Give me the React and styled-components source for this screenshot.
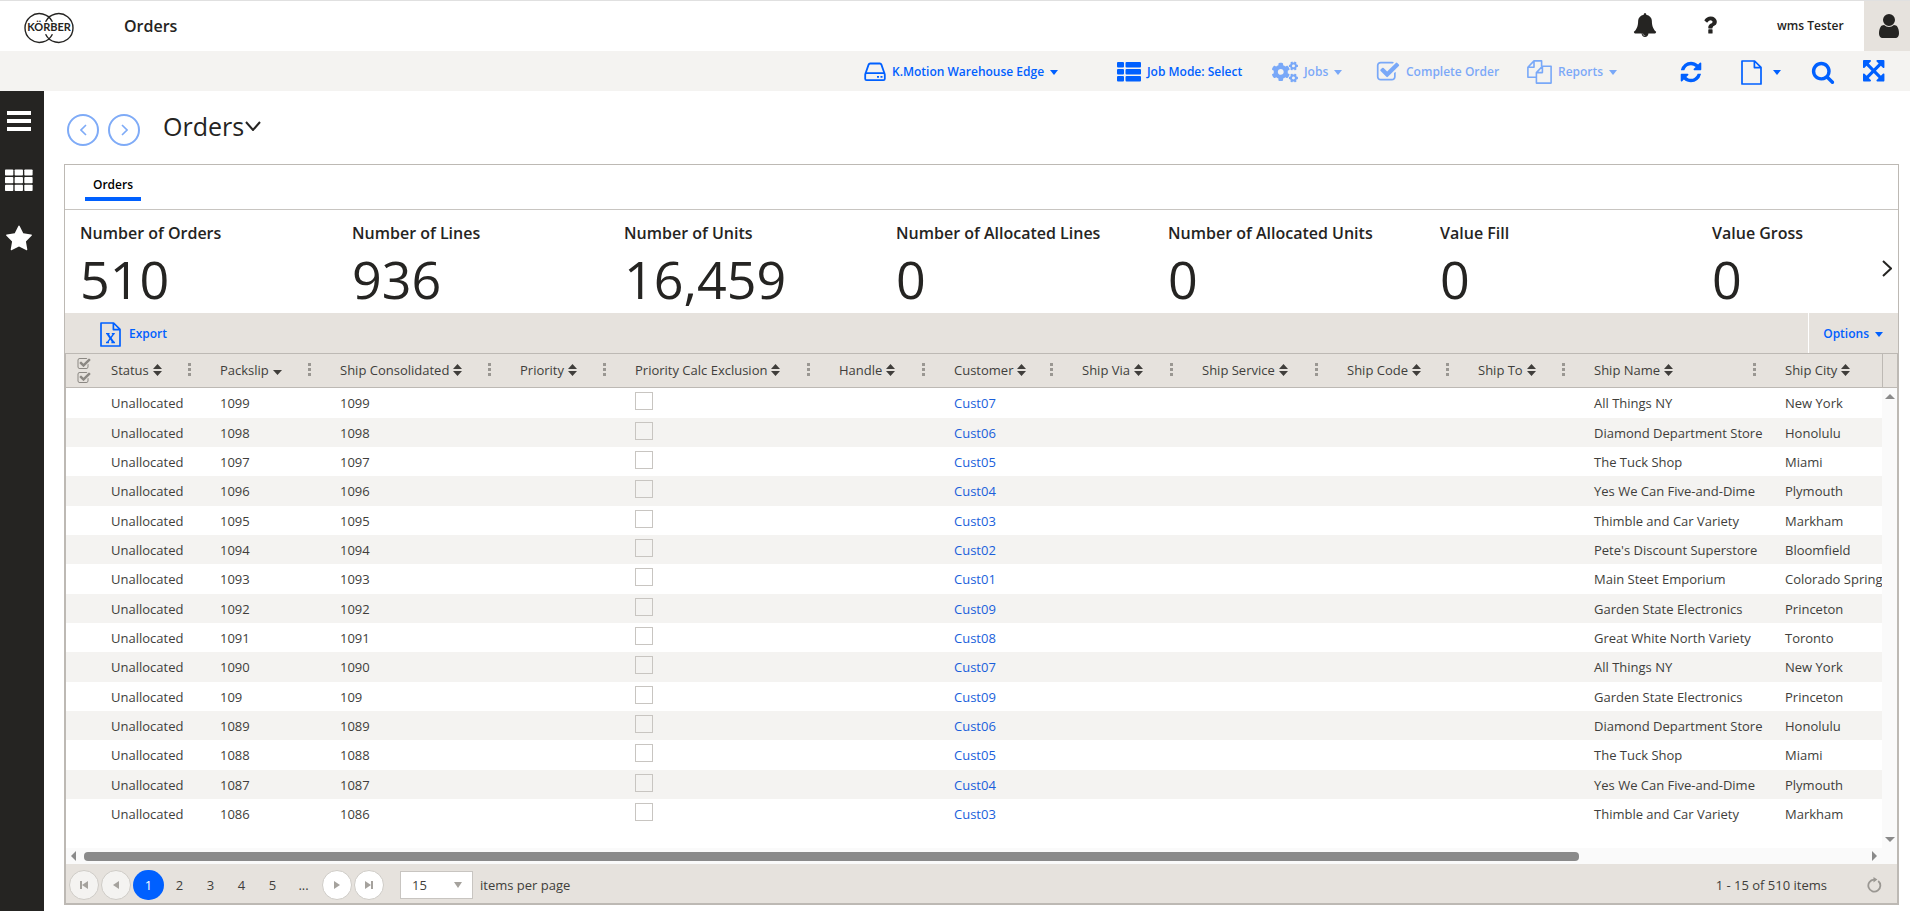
import React from 'react';
import styled, { createGlobalStyle, css } from 'styled-components';
import { FaCogs } from 'react-icons/fa';

const BLUE = '#0060ff';
const INK = '#252422';
const SAND = '#e6e2dd';
const LINE = '#bdb9b4';

const GlobalStyle = createGlobalStyle`
  *, *::before, *::after { box-sizing: border-box; }
  body {
    margin: 0;
    background: #fff;
    color: ${INK};
    font-family: "Open Sans", "Noto Sans", sans-serif;
    font-size: 13px;
    line-height: 20px;
  }
  button, input, select { font: inherit; color: inherit; }
  h1, h2, dl, dt, dd, ul { margin: 0; padding: 0; font-weight: 400; }
`;

/* ---------- icons ---------- */

const Glyph = ({ d, size = 24, box = '0 0 1792 1792' }) => (
  <svg width={size} height={size} viewBox={box} fill="currentColor" aria-hidden="true">
    <path d={d} />
  </svg>
);

const PATHS = {
  star: 'M1728 647q0 22-26 48l-363 354 86 500q1 7 1 20 0 21-10.5 35.5t-30.5 14.5q-19 0-40-12l-449-236-449 236q-22 12-40 12-21 0-31.5-14.5t-10.5-35.5q0-6 2-20l86-500-364-354q-25-27-25-48 0-37 56-46l502-73 225-455q19-41 49-41t49 41l225 455 502 73q56 9 56 46z',
  search: 'M1216 832q0-185-131.5-316.5t-316.5-131.5-316.5 131.5-131.5 316.5 131.5 316.5 316.5 131.5 316.5-131.5 131.5-316.5zm512 832q0 52-38 90t-90 38q-54 0-90-38l-343-342q-179 124-399 124-143 0-273.5-55.5t-225-150-150-225-55.5-273.5 55.5-273.5 150-225 225-150 273.5-55.5 273.5 55.5 225 150 150 225 55.5 273.5q0 220-124 399l343 343q37 37 37 90z',
  user: 'M1536 1399q0 109-62.5 187t-150.5 78h-854q-88 0-150.5-78t-62.5-187q0-85 8.5-160.5t31.5-152 58.5-131 94-89 134.5-34.5q131 128 313 128t313-128q76 0 134.5 34.5t94 89 58.5 131 31.5 152 8.5 160.5zm-256-887q0 159-112.5 271.5t-271.5 112.5-271.5-112.5-112.5-271.5 112.5-271.5 271.5-112.5 271.5 112.5 112.5 271.5z',
  refresh: 'M1639 1056q0 5-1 7-64 268-268 434.5t-478 166.5q-146 0-282.5-55t-243.5-157l-129 129q-19 19-45 19t-45-19-19-45v-448q0-26 19-45t45-19h448q26 0 45 19t19 45-19 45l-137 137q71 66 161 102t187 36q134 0 250-65t186-179q11-17 53-117 8-23 30-23h192q13 0 22.5 9.5t9.5 22.5zm25-800v448q0 26-19 45t-45 19h-448q-26 0-45-19t-19-45 19-45l138-138q-148-137-349-137-134 0-250 65t-186 179q-11 17-53 117-8 23-30 23h-199q-13 0-22.5-9.5t-9.5-22.5v-7q65-268 270-434.5t480-166.5q146 0 284 55.5t245 156.5l130-129q19-19 45-19t45 19 19 45z',
  question: 'M1088 1256v240q0 16-12 28t-28 12h-240q-16 0-28-12t-12-28v-240q0-16 12-28t28-12h240q16 0 28 12t12 28zm316-600q0 54-15.5 101t-35 76.5-55 59.5-57.5 43.5-61 35.5q-41 23-68.5 65t-27.5 67q0 17-12 32.5t-28 15.5h-240q-15 0-25.5-18.5t-10.5-37.5v-45q0-83 65-156.5t143-108.5q59-27 84-56t25-76q0-42-46.5-74t-107.5-32q-65 0-108 29-35 25-107 115-13 16-31 16-12 0-25-8l-164-125q-13-10-15.5-25t5.5-28q160-266 464-266 80 0 161 31t146 83 106 127.5 41 158.5z',
  bell: 'M912 1696q0-16-16-16-59 0-101.5-42.5t-42.5-101.5q0-16-16-16t-16 16q0 73 51.5 124.5t124.5 51.5q16 0 16-16zm816-288q0 52-38 90t-90 38h-448q0 106-75 181t-181 75-181-75-75-181h-448q-52 0-90-38t-38-90q50-42 91-88t85-119.5 74.5-158.5 50-206 19.5-260q0-152 117-282.5t307-158.5q-8-19-8-39 0-40 28-68t68-28 68 28 28 68q0 20-8 39 190 28 307 158.5t117 282.5q0 139 19.5 260t50 206 74.5 158.5 85 119.5 91 88z',
  expand: 'M1283 413l-355 355 355 355 144-144q29-31 70-14 39 17 39 59v448q0 26-19 45t-45 19h-448q-42 0-59-40-17-39 14-69l144-144-355-355-355 355 144 144q31 30 14 69-17 40-59 40h-448q-26 0-45-19t-19-45v-448q0-42 40-59 39-17 69 14l144 144 355-355-355-355-144 144q-19 19-45 19-12 0-24-5-40-17-40-59v-448q0-26 19-45t45-19h448q42 0 59 40 17 39-14 69l-144 144 355 355 355-355-144-144q-31-30-14-69 17-40 59-40h448q26 0 45 19t19 45v448q0 42-39 59-13 5-25 5-26 0-45-19z',
  check: 'M1472 930v318q0 119-84.5 203.5t-203.5 84.5h-832q-119 0-203.5-84.5t-84.5-203.5v-832q0-119 84.5-203.5t203.5-84.5h832q63 0 117 25 15 7 18 23 3 17-9 29l-49 49q-10 10-23 10-3 0-9-2-23-6-45-6h-832q-66 0-113 47t-47 113v832q0 66 47 113t113 47h832q66 0 113-47t47-113v-254q0-13 9-22l64-64q10-10 23-10 6 0 12 3 20 8 20 29zm231-489l-814 814q-24 24-57 24t-57-24l-430-430q-24-24-24-57t24-57l110-110q24-24 57-24t57 24l263 263 647-647q24-24 57-24t57 24l110 110q24 24 24 57t-24 57z',
};

const DriveIcon = () => (
  <svg width="22" height="20" viewBox="0 0 22 20" fill="none" stroke="currentColor" strokeWidth="1.8" aria-hidden="true">
    <path d="M1.5 11.5 4.6 2.6Q5 1.5 6.2 1.5h9.6q1.2 0 1.6 1.1l3.1 8.9" />
    <rect x="1.2" y="11.2" width="19.6" height="7" rx="1.4" />
    <path d="M13 14.8h2M16.5 14.8h2" />
  </svg>
);

const ListIcon = () => (
  <svg width="24" height="20" viewBox="0 0 24 20" fill="currentColor" aria-hidden="true">
    {[0, 7, 14].map((y) => (
      <g key={y}>
        <rect x="0" y={y} width="7" height="5.6" rx="1" />
        <rect x="8.5" y={y} width="15.5" height="5.6" rx="1" />
      </g>
    ))}
  </svg>
);

const PagesIcon = () => (
  <svg width="25" height="24" viewBox="0 0 25 24" fill="none" stroke="currentColor" strokeWidth="1.6" strokeLinejoin="round" aria-hidden="true">
    <path d="M9 17.2H.9V7.2L7 .9h7.6v5.6M.9 7.2H7V.9" />
    <path d="M9.4 12.6 15.4 6.3h8.7v16.8H9.4zM9.4 12.6h6V6.3" />
  </svg>
);

const PageIcon = ({ excel }) => (
  <svg width="21" height="25" viewBox="0 0 21 25" fill="none" stroke="currentColor" strokeWidth="1.7" strokeLinejoin="round" aria-hidden="true">
    <path d="M1 1h12.6L20 7.4V24H1zM13.4 1v6.6H20" />
    {excel && (
      <>
        <path d="M7.6 12l5.8 8.4" strokeWidth="2.1" />
        <path d="M13.6 12 7.4 20.4M6 11.7h3.6M11.8 11.7h3M6 20.5h3M11.4 20.5h3.6" strokeWidth="1.3" />
      </>
    )}
  </svg>
);

const BarsIcon = () => (
  <svg width="24" height="20" viewBox="0 0 24 20" fill="currentColor" aria-hidden="true">
    <path d="M0 0h24v4H0zM0 8h24v4H0zM0 16h24v4H0z" />
  </svg>
);

const TilesIcon = () => (
  <svg width="29" height="23" viewBox="0 0 29 23" fill="currentColor" aria-hidden="true">
    {[0, 8, 16].map((y) =>
      [0, 10, 20].map((x) => <rect key={`${x}-${y}`} x={x} y={y} width="8.6" height="6.4" rx="0.8" />)
    )}
  </svg>
);

const Logo = () => (
  <svg width="52" height="32" viewBox="0 0 52 32" fill="none" stroke={INK} role="img" aria-label="Körber">
    <g strokeWidth="1.4">
      <path d="M29.4 9.8A14.4 14.4 0 1 0 29.4 22.2" />
      <path d="M22.6 9.8A14.4 14.4 0 1 1 22.6 22.2" />
    </g>
    <text x="26" y="19.4" textAnchor="middle" fontFamily="Lato, sans-serif" fontSize="11" fontWeight="700" fill={INK} stroke="none">
      KÖRBER
    </text>
  </svg>
);

const Chevron = ({ dir = 'right', w = 8, h = 14, weight = 1.6 }) => {
  const d = {
    right: `M1 1 ${w - 1} ${h / 2} 1 ${h - 1}`,
    left: `M${w - 1} 1 1 ${h / 2} ${w - 1} ${h - 1}`,
    down: `M1 1 ${w / 2} ${h - 1} ${w - 1} 1`,
  }[dir];
  return (
    <svg width={w} height={h} viewBox={`0 0 ${w} ${h}`} fill="none" stroke="currentColor" strokeWidth={weight} aria-hidden="true">
      <path d={d} />
    </svg>
  );
};

const Triangle = ({ dir = 'down', size = 8, depth = 5, bar }) => {
  const horizontal = dir === 'left' || dir === 'right';
  const w = horizontal ? depth : size;
  const h = horizontal ? size : depth;
  const d = {
    down: `M0 0h${w}L${w / 2} ${h}z`,
    up: `M0 ${h}h${w}L${w / 2} 0z`,
    left: `M${w} 0v${h}L0 ${h / 2}z`,
    right: `M0 0v${h}L${w} ${h / 2}z`,
  }[dir];
  return (
    <svg width={bar ? w + 2 : w} height={h} viewBox={`${bar && dir === 'left' ? -2 : 0} 0 ${bar ? w + 2 : w} ${h}`} fill="currentColor" aria-hidden="true">
      <path d={d} />
      {bar && <rect x={dir === 'left' ? -2 : w} y="0" width="2" height={h} />}
    </svg>
  );
};

const SortIcon = ({ active }) => (
  <svg width="9" height="12" viewBox="0 0 9 12" fill="currentColor" aria-hidden="true">
    {active ? <path d="M0 6h9L4.5 11z" /> : <path d="M0 5h9L4.5 0zM0 7h9L4.5 12z" />}
  </svg>
);

const ReloadIcon = () => (
  <svg width="16" height="16" viewBox="0 0 16 16" fill="none" stroke="currentColor" strokeWidth="1.8" aria-hidden="true">
    <path d="M12.2 4A6 6 0 1 1 8 2.6" />
    <path d="M7.5 0v5.4L11.4 2.6z" fill="currentColor" stroke="none" />
  </svg>
);

/* ---------- shell ---------- */

const Page = styled.div`
  display: flex;
  flex-direction: column;
  min-height: 100vh;
`;

const plainButton = css`
  display: inline-flex;
  align-items: center;
  padding: 0;
  border: 0;
  background: none;
  cursor: pointer;
`;

const Header = styled.header`
  display: flex;
  align-items: stretch;
  height: 51px;
  border-top: 1px solid #e0e0e0;
  padding-left: 23px;
`;

const Brand = styled.a`
  display: flex;
  align-items: center;
  padding-top: 4px;
`;

const AppName = styled.span`
  flex: 1;
  align-self: center;
  padding-left: 49px;
  font-size: 16px;
  font-weight: 600;
`;

const HeaderActions = styled.div`
  display: grid;
  grid-template-columns: 65px 79px 87px 46px;
`;

const HeaderButton = styled.button`
  ${plainButton}
  padding-bottom: 2px;
`;

const UserName = styled.span`
  align-self: center;
  font-size: 12px;
  font-weight: 600;
  white-space: nowrap;
`;

const Account = styled.button`
  ${plainButton}
  justify-content: center;
  padding-left: 3px;
  background: ${SAND};
`;

const Toolbar = styled.nav`
  display: grid;
  grid-template-columns: 253px 155px 104px 151px 152px 62px 70px 52px 22px;
  justify-content: end;
  justify-items: start;
  height: 40px;
  padding: 2px 25px 0 0;
  background: #f4f3f1;
`;

const Tool = styled.button`
  ${plainButton}
  gap: ${(p) => p.$gap || 6}px;
  color: ${BLUE};
  font-size: 12px;
  font-weight: 600;
  white-space: nowrap;

  &:disabled {
    opacity: 0.5;
    cursor: default;
  }
`;

const Main = styled.div`
  display: flex;
  flex: 1;
`;

const Sidebar = styled.nav`
  display: flex;
  flex-direction: column;
  align-items: flex-start;
  gap: 33px;
  width: 44px;
  padding: 17px 0 0 5px;
  background: ${INK};
`;

const SideButton = styled.button`
  ${plainButton}
  justify-content: center;
  width: 28px;
  height: 26px;
  color: #fff;
`;

const Content = styled.main`
  display: flex;
  flex: 1;
  flex-direction: column;
  min-width: 0;
  padding: 0 11px 6px 20px;
`;

const TitleBar = styled.div`
  display: flex;
  align-items: center;
  height: 73px;
  padding: 4px 0 0 3px;
`;

const RoundButton = styled.button`
  ${plainButton}
  justify-content: center;
  width: 32px;
  height: 32px;
  margin-right: 9px;
  border: 2px solid #7fabf7;
  border-radius: 50%;
  color: #7fabf7;
`;

const Title = styled.h1`
  display: flex;
  align-items: center;
  gap: 1px;
  padding: 0 0 8px 14px;
  font-size: 25px;
  line-height: 36px;
`;

const Panel = styled.section`
  display: flex;
  flex: 1;
  flex-direction: column;
  border: 1px solid ${LINE};
`;

const Tabs = styled.div`
  display: flex;
  align-items: flex-start;
  height: 45px;
  padding: 8px 20px 0;
  border-bottom: 1px solid #c8c5c1;
`;

const Tab = styled.button`
  ${plainButton}
  justify-content: center;
  width: 56px;
  height: 28px;
  border-bottom: 4px solid ${BLUE};
  color: #000;
  font-size: 12px;
  font-weight: 600;
`;

/* ---------- key figures ---------- */

const Figures = styled.div`
  display: flex;
  height: 103px;
`;

const FigureList = styled.dl`
  display: flex;
  flex: 1;
  min-width: 0;
  overflow: hidden;
  padding: 11px 0 0 15px;
`;

const Figure = styled.div`
  flex: 0 0 272px;
`;

const FigureName = styled.dt`
  font-size: 16px;
  font-weight: 600;
  line-height: 24px;
  white-space: nowrap;
`;

const FigureValue = styled.dd`
  font-size: 52px;
  line-height: 68px;
`;

const NextFigures = styled.button`
  ${plainButton}
  width: 16px;
  padding-top: 14px;
`;

/* ---------- grid ---------- */

const GridBar = styled.div`
  display: flex;
  align-items: stretch;
  justify-content: space-between;
  height: 40px;
  background: ${SAND};
`;

const ExportButton = styled(Tool)`
  padding: 2px 0 0 35px;
`;

const OptionsButton = styled(Tool)`
  padding: 2px 15px 0 14px;
  border-left: 1px solid #fff;
`;

const Grid = styled.div`
  display: flex;
  flex: 1;
  flex-direction: column;
  border: 1px solid ${LINE};
`;

const GridArea = styled.div`
  display: flex;
  flex: 1;
`;

const TableView = styled.div`
  flex: 1;
  min-width: 0;
  overflow: hidden;
`;

const Table = styled.table`
  width: 100%;
  border-collapse: separate;
  border-spacing: 0;
  table-layout: fixed;
  color: #403e3b;
`;

const Col = styled.col`
  width: ${(p) => (p.$w ? `${p.$w}px` : 'auto')};
`;

const HeadCell = styled.th`
  height: 34px;
  padding: 0 13px 2px 12px;
  border-bottom: 1px solid ${LINE};
  background: ${SAND};
  font-weight: 400;
  text-align: left;
  white-space: nowrap;
`;

const SelectHead = styled(HeadCell)`
  padding: 0 0 0 11px;
  color: #8b8883;

  svg { display: block; }
`;

const HeadInner = styled.div`
  display: flex;
  align-items: center;
  justify-content: space-between;
`;

const SortButton = styled.button`
  ${plainButton}
  gap: 4px;
`;

const MenuDots = styled.button`
  ${plainButton}
  flex-direction: column;
  justify-content: space-between;
  width: 3px;
  height: 13px;
  margin-right: 4px;

  i {
    width: 3px;
    height: 3px;
    background: #9a9792;
  }
`;

const Row = styled.tr`
  height: 29px;

  &:nth-child(3n + 1) { height: 30px; }
  &:nth-child(even) { background: #f4f3f1; }
`;

const Cell = styled.td`
  padding: 0 0 0 12px;
  overflow: hidden;
  white-space: nowrap;
`;

const CustomerLink = styled.a`
  color: #1a5fdb;
  text-decoration: none;
`;

const Tick = styled.input`
  display: block;
  appearance: none;
  width: 18px;
  height: 18px;
  margin: 0 0 4px;
  border: 1px solid #c8c5c1;
`;

const ScrollSide = styled.div`
  display: flex;
  flex-direction: column;
  width: 15px;
`;

const ScrollHead = styled.div`
  height: 34px;
  border-bottom: 1px solid ${LINE};
  border-left: 1px solid ${LINE};
  background: ${SAND};
`;

const VerticalTrack = styled.div`
  display: flex;
  flex: 1;
  flex-direction: column;
  align-items: center;
  justify-content: space-between;
  padding: 6px 0;
  background: #fafafa;
  color: #8a8a8a;
`;

const HorizontalTrack = styled.div`
  display: flex;
  align-items: center;
  gap: 8px;
  height: 16px;
  padding: 0 20px 0 5px;
  background: #fafafa;
  color: #8a8a8a;
`;

const ThumbLane = styled.div`
  flex: 1;
`;

const Thumb = styled.div`
  width: 84%;
  height: 9px;
  border-radius: 4px;
  background: #8a8a8a;
`;

const Pager = styled.div`
  display: flex;
  align-items: center;
  height: 39px;
  padding: 3px 15px 0 3px;
  background: ${SAND};
  color: #403e3b;
`;

const PagerStep = styled.button`
  ${plainButton}
  justify-content: center;
  width: 30px;
  height: 30px;
  margin-right: 2px;
  border: 1px solid #cfccc7;
  border-radius: 50%;
  background: #fff;
  color: #a5a29d;

  &:disabled { background: #f4f3f1; }
`;

const PageNumber = styled.button`
  ${plainButton}
  justify-content: center;
  width: 31px;
  height: 30px;
  border-radius: 15px;
  background: ${(p) => (p.$current ? BLUE : 'transparent')};
  color: ${(p) => (p.$current ? '#fff' : 'inherit')};
`;

const PageNumbers = styled.div`
  display: flex;
  padding-right: 3px;
`;

const SizeLabel = styled.label`
  display: flex;
  align-items: center;
  gap: 7px;
  margin-left: 14px;
`;

const SizeBox = styled.span`
  display: grid;
  align-items: center;
  width: 73px;
  height: 28px;

  > * { grid-area: 1 / 1; }
  > svg { justify-self: end; margin-right: 11px; color: #a5a29d; pointer-events: none; }
`;

const SizeSelect = styled.select`
  appearance: none;
  width: 100%;
  height: 28px;
  padding: 0 24px 0 11px;
  border: 1px solid #c8c5c1;
  border-radius: 0;
  background: #fff;
`;

const RangeText = styled.span`
  margin-left: auto;
  padding-right: 39px;
`;

const Reload = styled.button`
  ${plainButton}
  color: #9a9792;
`;

/* ---------- data ---------- */

const figures = [
  ['Number of Orders', '510'],
  ['Number of Lines', '936'],
  ['Number of Units', '16,459'],
  ['Number of Allocated Lines', '0'],
  ['Number of Allocated Units', '0'],
  ['Value Fill', '0'],
  ['Value Gross', '0'],
];

const columns = [
  ['Status', 109],
  ['Packslip', 120],
  ['Ship Consolidated', 180],
  ['Priority', 115],
  ['Priority Calc Exclusion', 204],
  ['Handle', 115],
  ['Customer', 128],
  ['Ship Via', 120],
  ['Ship Service', 145],
  ['Ship Code', 131],
  ['Ship To', 116],
  ['Ship Name', 191],
  ['Ship City', 0],
];

const customers = {
  Cust01: ['Main Steet Emporium', 'Colorado Spring'],
  Cust02: ["Pete's Discount Superstore", 'Bloomfield'],
  Cust03: ['Thimble and Car Variety', 'Markham'],
  Cust04: ['Yes We Can Five-and-Dime', 'Plymouth'],
  Cust05: ['The Tuck Shop', 'Miami'],
  Cust06: ['Diamond Department Store', 'Honolulu'],
  Cust07: ['All Things NY', 'New York'],
  Cust08: ['Great White North Variety', 'Toronto'],
  Cust09: ['Garden State Electronics', 'Princeton'],
};

const orders = [
  ['1099', 'Cust07'],
  ['1098', 'Cust06'],
  ['1097', 'Cust05'],
  ['1096', 'Cust04'],
  ['1095', 'Cust03'],
  ['1094', 'Cust02'],
  ['1093', 'Cust01'],
  ['1092', 'Cust09'],
  ['1091', 'Cust08'],
  ['1090', 'Cust07'],
  ['109', 'Cust09'],
  ['1089', 'Cust06'],
  ['1088', 'Cust05'],
  ['1087', 'Cust04'],
  ['1086', 'Cust03'],
];

const OrdersTable = () => (
  <Table>
    <colgroup>
      <Col $w={33} />
      {columns.map(([name, w]) => <Col key={name} $w={w} />)}
    </colgroup>
    <thead>
      <tr>
        <SelectHead aria-label="Select all">
          <Glyph d={PATHS.check} size={14} />
          <Glyph d={PATHS.check} size={14} />
        </SelectHead>
        {columns.map(([name, w]) => (
          <HeadCell key={name}>
            <HeadInner>
              <SortButton>
                {name}
                <SortIcon active={name === 'Packslip'} />
              </SortButton>
              {w > 0 && <MenuDots aria-label={`${name} menu`}><i /><i /><i /></MenuDots>}
            </HeadInner>
          </HeadCell>
        ))}
      </tr>
    </thead>
    <tbody>
      {orders.map(([slip, cust]) => (
        <Row key={slip}>
          <Cell />
          <Cell>Unallocated</Cell>
          <Cell>{slip}</Cell>
          <Cell>{slip}</Cell>
          <Cell />
          <Cell><Tick type="checkbox" aria-label={`Priority calc exclusion ${slip}`} /></Cell>
          <Cell />
          <Cell><CustomerLink href="#customer">{cust}</CustomerLink></Cell>
          <Cell />
          <Cell />
          <Cell />
          <Cell />
          <Cell>{customers[cust][0]}</Cell>
          <Cell>{customers[cust][1]}</Cell>
        </Row>
      ))}
    </tbody>
  </Table>
);

export default function App() {
  return (
    <Page>
      <GlobalStyle />
      <Header>
        <Brand href="#home"><Logo /></Brand>
        <AppName>Orders</AppName>
        <HeaderActions>
          <HeaderButton aria-label="Notifications"><Glyph d={PATHS.bell} size={24} /></HeaderButton>
          <HeaderButton aria-label="Help"><Glyph d={PATHS.question} size={24} /></HeaderButton>
          <UserName>wms Tester</UserName>
          <Account aria-label="Account"><Glyph d={PATHS.user} size={28} /></Account>
        </HeaderActions>
      </Header>
      <Toolbar>
        <Tool><DriveIcon />K.Motion Warehouse Edge<Triangle /></Tool>
        <Tool><ListIcon />Job Mode: Select</Tool>
        <Tool disabled><FaCogs size={26} />Jobs<Triangle /></Tool>
        <Tool disabled><Glyph d={PATHS.check} size={24} />Complete Order</Tool>
        <Tool disabled><PagesIcon />Reports<Triangle /></Tool>
        <Tool aria-label="Refresh"><Glyph d={PATHS.refresh} size={24} /></Tool>
        <Tool $gap={11} aria-label="New document"><PageIcon /><Triangle /></Tool>
        <Tool aria-label="Search"><Glyph d={PATHS.search} size={24} /></Tool>
        <Tool aria-label="Full screen"><Glyph d={PATHS.expand} size={25} /></Tool>
      </Toolbar>
      <Main>
        <Sidebar>
          <SideButton aria-label="Menu"><BarsIcon /></SideButton>
          <SideButton aria-label="Apps"><TilesIcon /></SideButton>
          <SideButton aria-label="Favourites"><Glyph d={PATHS.star} size={28} /></SideButton>
        </Sidebar>
        <Content>
          <TitleBar>
            <RoundButton aria-label="Back"><Chevron dir="left" w={7} h={12} /></RoundButton>
            <RoundButton aria-label="Forward"><Chevron w={7} h={12} /></RoundButton>
            <Title>Orders<Chevron dir="down" w={16} h={10} weight={2} /></Title>
          </TitleBar>
          <Panel>
            <Tabs><Tab>Orders</Tab></Tabs>
            <Figures>
              <FigureList>
                {figures.map(([name, value]) => (
                  <Figure key={name}>
                    <FigureName>{name}</FigureName>
                    <FigureValue>{value}</FigureValue>
                  </Figure>
                ))}
              </FigureList>
              <NextFigures aria-label="More figures"><Chevron w={10} h={17} weight={2} /></NextFigures>
            </Figures>
            <GridBar>
              <ExportButton $gap={8}><PageIcon excel />Export</ExportButton>
              <OptionsButton>Options<Triangle /></OptionsButton>
            </GridBar>
            <Grid>
              <GridArea>
                <TableView><OrdersTable /></TableView>
                <ScrollSide>
                  <ScrollHead />
                  <VerticalTrack>
                    <Triangle dir="up" size={10} />
                    <Triangle size={10} />
                  </VerticalTrack>
                </ScrollSide>
              </GridArea>
              <HorizontalTrack>
                <Triangle dir="left" size={10} />
                <ThumbLane><Thumb /></ThumbLane>
                <Triangle dir="right" size={10} />
              </HorizontalTrack>
              <Pager>
                <PagerStep disabled aria-label="First page"><Triangle dir="left" size={8} depth={6} bar /></PagerStep>
                <PagerStep disabled aria-label="Previous page"><Triangle dir="left" size={8} depth={6} /></PagerStep>
                <PageNumbers>
                  {['1', '2', '3', '4', '5', '...'].map((n) => (
                    <PageNumber key={n} $current={n === '1'}>{n}</PageNumber>
                  ))}
                </PageNumbers>
                <PagerStep aria-label="Next page"><Triangle dir="right" size={8} depth={6} /></PagerStep>
                <PagerStep aria-label="Last page"><Triangle dir="right" size={8} depth={6} bar /></PagerStep>
                <SizeLabel>
                  <SizeBox>
                    <SizeSelect defaultValue="15">
                      <option>15</option>
                      <option>30</option>
                    </SizeSelect>
                    <Triangle size={8} depth={6} />
                  </SizeBox>
                  items per page
                </SizeLabel>
                <RangeText>1 - 15 of 510 items</RangeText>
                <Reload aria-label="Reload"><ReloadIcon /></Reload>
              </Pager>
            </Grid>
          </Panel>
        </Content>
      </Main>
    </Page>
  );
}
